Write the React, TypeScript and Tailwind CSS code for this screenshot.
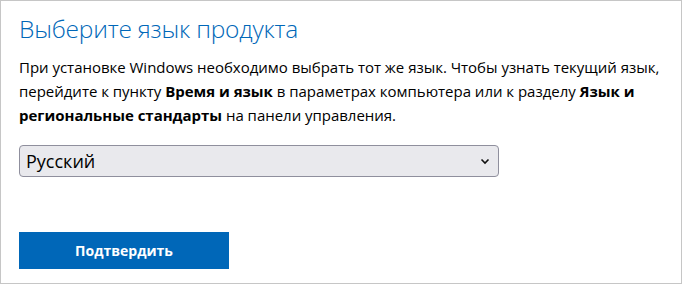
export default function App() {
  return (
    <div className="w-[682px] h-[284px] border border-[#c6c6c6] bg-white px-[18px] pt-[8px] font-['Open_Sans',sans-serif] text-[#1a1a1a]">
      <h1 className="text-[24.5px] font-light leading-[40px] text-[#0067b8] tracking-[-0.2px]">
        Выберите язык продукта
      </h1>
      <p className="mt-[6px] text-[15px] leading-[24px] text-black tracking-[-0.02px]">
        При установке Windows необходимо выбрать тот же язык. Чтобы узнать текущий язык,
        <br />
        перейдите к пункту <b>Время и язык</b> в параметрах компьютера или к разделу <b>Язык и</b>
        <br />
        <b>региональные стандарты</b> на панели управления.
      </p>
      <div className="mt-[18px] w-[480px] h-[32px] flex items-center justify-between rounded-[4px] border border-[#8f8f9d] bg-[#e9e9ed] pl-[6px] pr-[8px]">
        <span className="text-[18px] text-black">Русский</span>
        <svg width="10" height="10" viewBox="0 0 10 10">
          <path d="M1.5 3.5 L5 7 L8.5 3.5" fill="none" stroke="#111" strokeWidth="1.6" />
        </svg>
      </div>
      <button className="mt-[55px] w-[210px] h-[37px] bg-[#0067b8] text-white text-[14px] font-bold">
        Подтвердить
      </button>
    </div>
  );
}
